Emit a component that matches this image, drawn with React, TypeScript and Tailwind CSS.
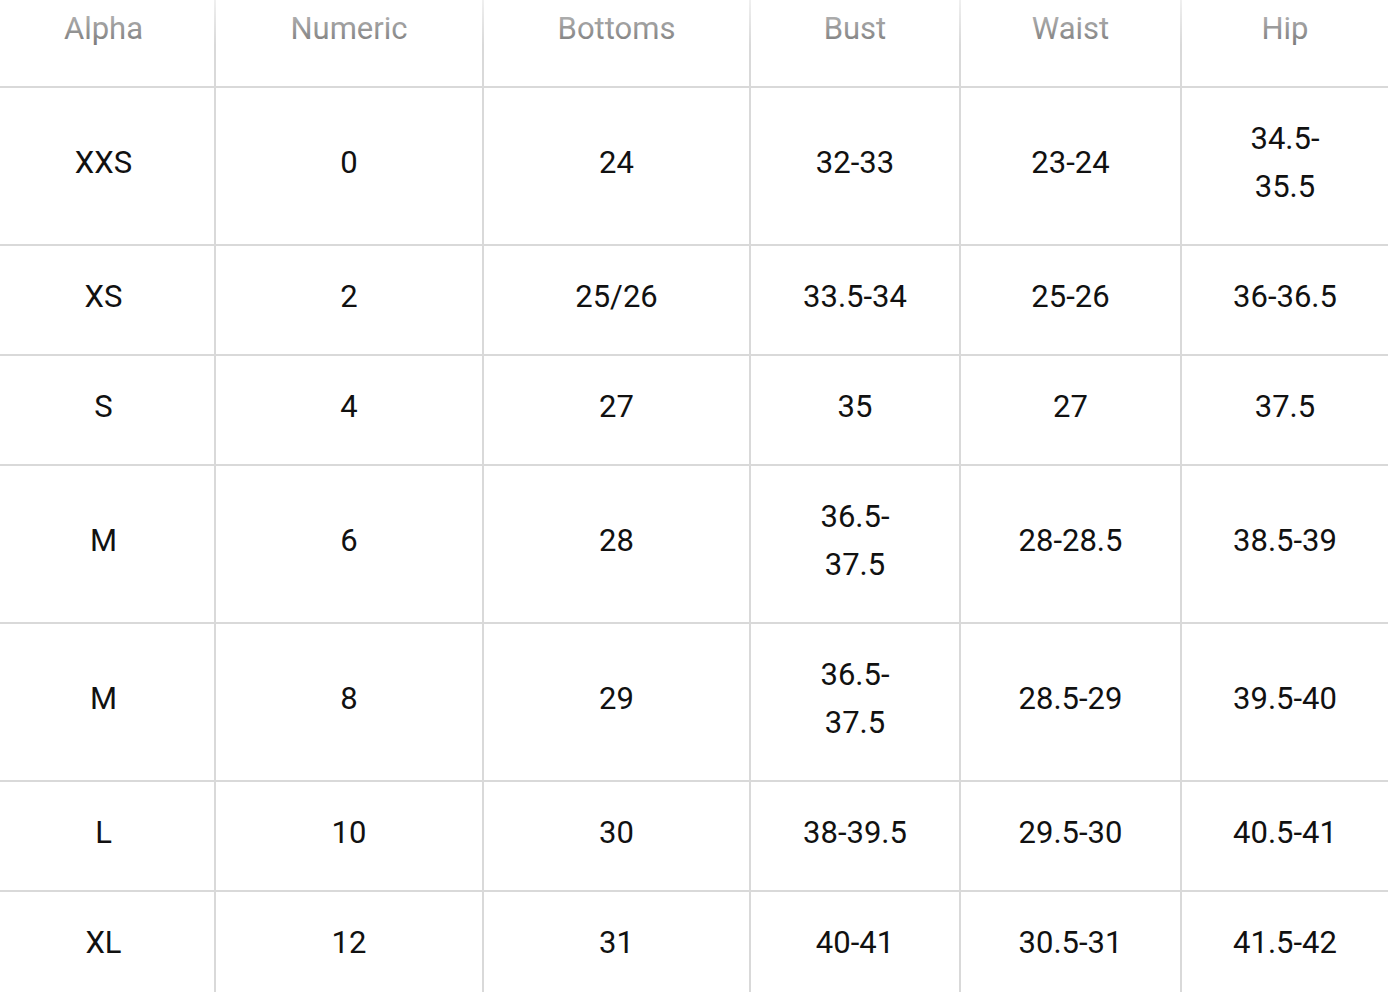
type SizeRow = {
  alpha: string;
  numeric: string;
  bottoms: string;
  bust: string;
  waist: string;
  hip: string;
};

const columns: { label: string; key: keyof SizeRow; width: string; pad: string }[] = [
  { label: 'Alpha', key: 'alpha', width: 'w-[215px]', pad: 'pl-[40px] pr-[47px]' },
  { label: 'Numeric', key: 'numeric', width: 'w-[268px]', pad: 'px-[46px]' },
  { label: 'Bottoms', key: 'bottoms', width: 'w-[267px]', pad: 'px-[46px]' },
  { label: 'Bust', key: 'bust', width: 'w-[210px]', pad: 'px-[46px]' },
  { label: 'Waist', key: 'waist', width: 'w-[221px]', pad: 'px-[46px]' },
  { label: 'Hip', key: 'hip', width: 'w-[207px]', pad: 'px-[46px]' },
];

const rows: SizeRow[] = [
  { alpha: 'XXS', numeric: '0', bottoms: '24', bust: '32-33', waist: '23-24', hip: '34.5-35.5' },
  { alpha: 'XS', numeric: '2', bottoms: '25/26', bust: '33.5-34', waist: '25-26', hip: '36-36.5' },
  { alpha: 'S', numeric: '4', bottoms: '27', bust: '35', waist: '27', hip: '37.5' },
  { alpha: 'M', numeric: '6', bottoms: '28', bust: '36.5-37.5', waist: '28-28.5', hip: '38.5-39' },
  { alpha: 'M', numeric: '8', bottoms: '29', bust: '36.5-37.5', waist: '28.5-29', hip: '39.5-40' },
  { alpha: 'L', numeric: '10', bottoms: '30', bust: '38-39.5', waist: '29.5-30', hip: '40.5-41' },
  { alpha: 'XL', numeric: '12', bottoms: '31', bust: '40-41', waist: '30.5-31', hip: '41.5-42' },
];

export default function App() {
  return (
    <div className="relative h-[992px] w-[1388px] overflow-hidden bg-white font-['Roboto','Liberation_Sans',sans-serif]">
      <table className="w-[1388px] table-fixed border-collapse text-center text-[31px] leading-[48px]">
        <colgroup>
          {columns.map((col) => (
            <col key={col.key} className={col.width} />
          ))}
        </colgroup>
        <thead>
          <tr className="border-b-2 border-[#d9d9d9]">
            {columns.map((col, i) => (
              <th
                key={col.key}
                className={`${col.pad} pt-[5px] pb-[33px] align-top text-[31px] font-normal text-[#7c7c7c] ${
                  i > 0 ? 'border-l-2 border-[#d9d9d9]' : ''
                }`}
              >
                {col.label}
              </th>
            ))}
          </tr>
        </thead>
        <tbody>
          {rows.map((row, r) => (
            <tr key={r} className="border-b-2 border-[#d9d9d9]">
              {columns.map((col, i) => (
                <td
                  key={col.key}
                  className={`${col.pad} pt-[27px] pb-[33px] align-middle text-[#111111] ${
                    i > 0 ? 'border-l-2 border-[#d9d9d9]' : ''
                  }`}
                >
                  {row[col.key]}
                </td>
              ))}
            </tr>
          ))}
        </tbody>
      </table>
      <div className="pointer-events-none absolute inset-x-0 top-0 h-[45px] bg-gradient-to-b from-white/60 to-white/0" />
    </div>
  );
}
